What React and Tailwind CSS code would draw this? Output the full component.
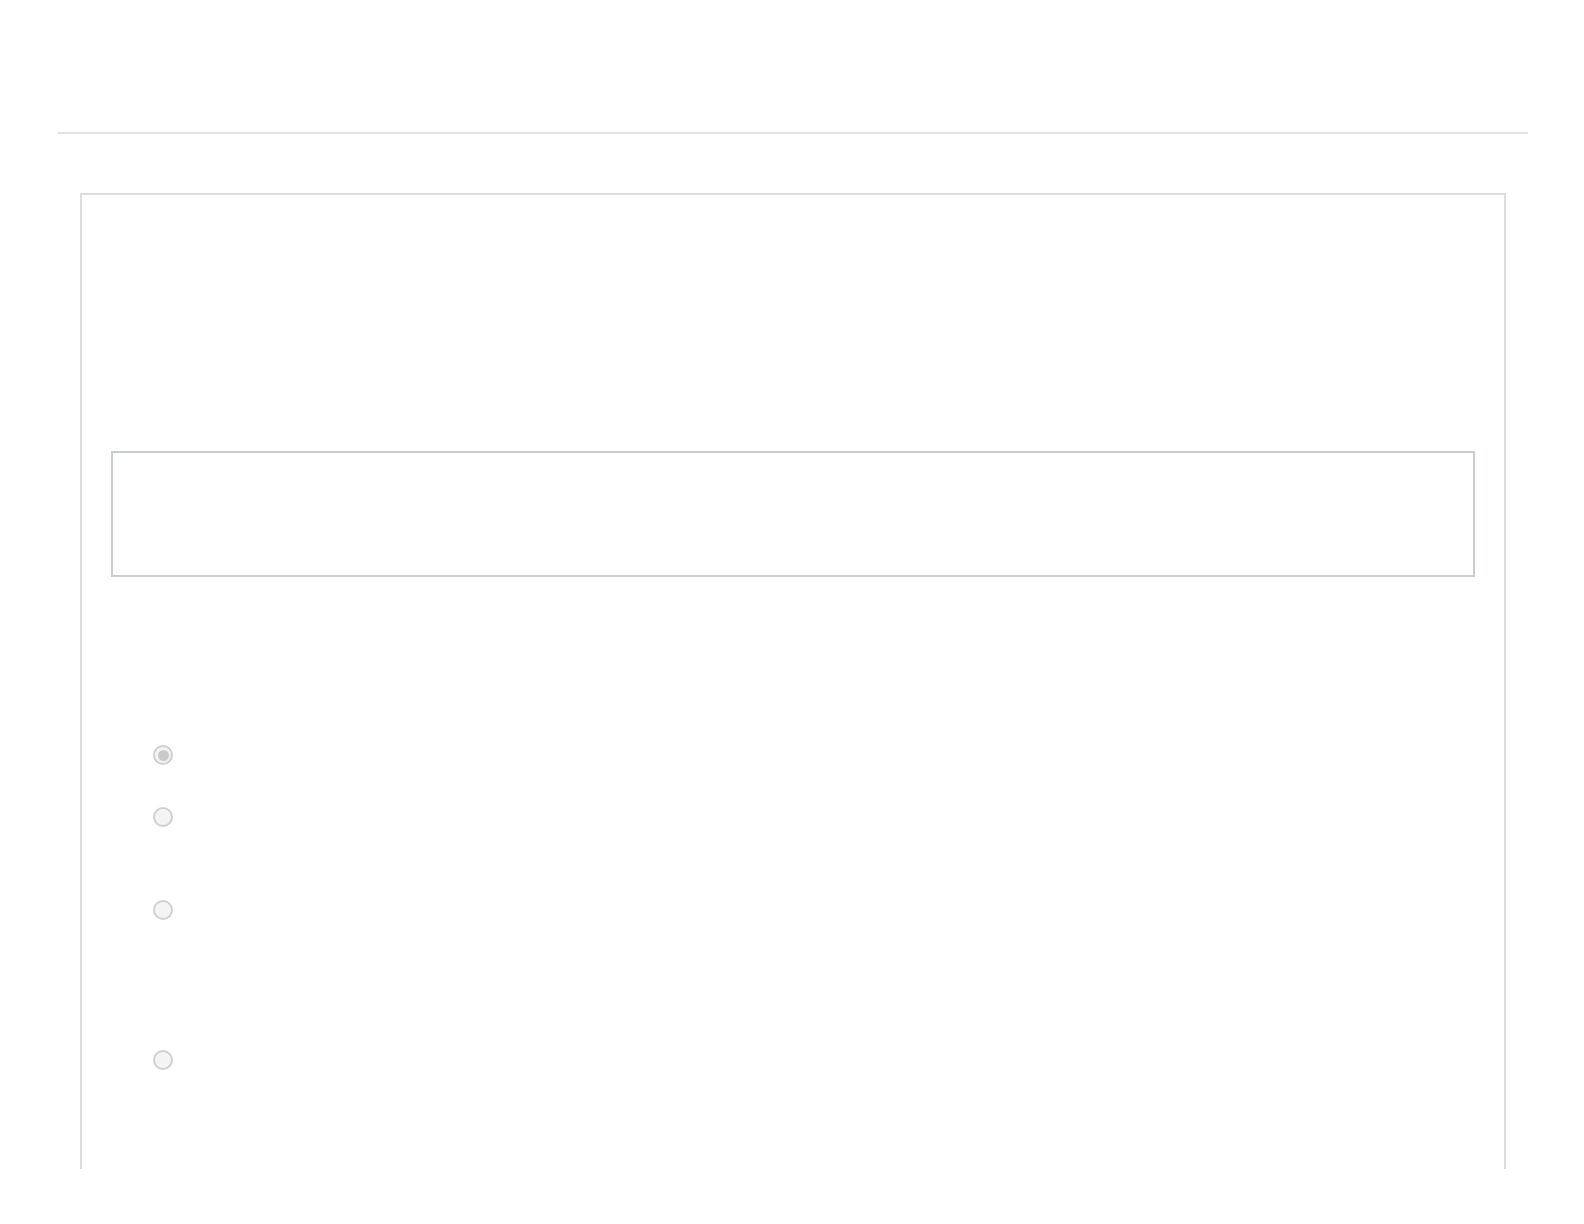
export default function App() {
  const options = [
    { checked: true, gap: 0 },
    { checked: false, gap: 42 },
    { checked: false, gap: 73 },
    { checked: false, gap: 130 },
  ];

  return (
    <div className="w-[1584px] h-[1224px] bg-white overflow-hidden" style={{ fontFamily: '"Liberation Sans", Arial, sans-serif' }}>
      <div className="pt-[132px] px-[56px]">
        <div className="ml-[2px] h-[2px] w-[1470px] bg-[#e6e1e1]"></div>
      </div>

      <div className="mt-[59px] ml-[80px] w-[1426px] h-[976px] border-t-2 border-x-2 border-[#dddddd] px-[29px] pt-[256px]">
        <div className="h-[126px] w-full border-2 border-[#c8ccd4] bg-white"></div>

        <div className="pt-[168px] pl-[42px] flex flex-col">
          {options.map((o, i) => (
            <div key={i} className="flex items-center" style={{ marginTop: o.gap }}>
              <div className="w-[20px] h-[20px] rounded-full border-2 border-[#d0d0d0] bg-[#f4f4f4] flex items-center justify-center">
                {o.checked && <div className="w-[11px] h-[11px] rounded-full bg-[#c9c9c9]"></div>}
              </div>
            </div>
          ))}
        </div>
      </div>
    </div>
  );
}
